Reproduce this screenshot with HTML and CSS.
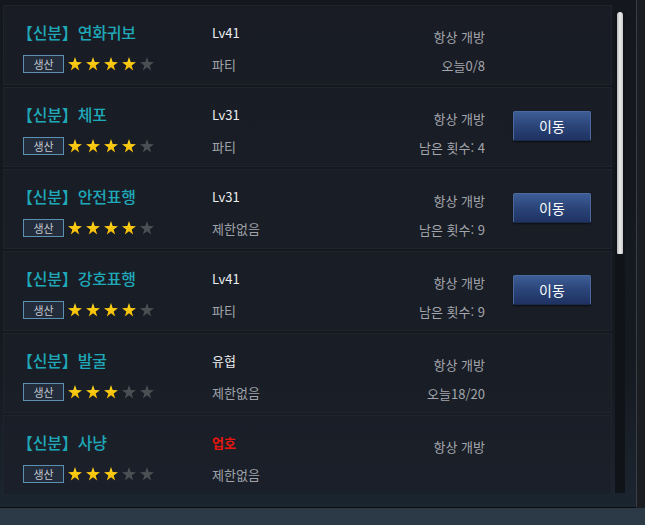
FILE: index.html
```html
<!DOCTYPE html>
<html lang="ko">
<head>
    <meta charset="UTF-8">
    <title>신분 목록</title>
    <link rel="stylesheet" href="styles.css">
</head>
<body>
    <div class="panel">
        <div class="list">
            <div class="row">
                <div class="title">【신분】연화귀보</div>
                <div class="level">Lv41</div>
                <div class="open">항상 개방</div>
                <div class="action"></div>
                <div class="tags">
                    <span class="badge">생산</span>
                    <span class="stars s4"><i></i><i></i><i></i><i></i><i></i></span>
                </div>
                <div class="cond">파티</div>
                <div class="count">오늘0/8</div>
            </div>
            <div class="row">
                <div class="title">【신분】체포</div>
                <div class="level">Lv31</div>
                <div class="open">항상 개방</div>
                <div class="action"><button class="move-btn">이동</button></div>
                <div class="tags">
                    <span class="badge">생산</span>
                    <span class="stars s4"><i></i><i></i><i></i><i></i><i></i></span>
                </div>
                <div class="cond">파티</div>
                <div class="count">남은 횟수: 4</div>
            </div>
            <div class="row">
                <div class="title">【신분】안전표행</div>
                <div class="level">Lv31</div>
                <div class="open">항상 개방</div>
                <div class="action"><button class="move-btn">이동</button></div>
                <div class="tags">
                    <span class="badge">생산</span>
                    <span class="stars s4"><i></i><i></i><i></i><i></i><i></i></span>
                </div>
                <div class="cond">제한없음</div>
                <div class="count">남은 횟수: 9</div>
            </div>
            <div class="row">
                <div class="title">【신분】강호표행</div>
                <div class="level">Lv41</div>
                <div class="open">항상 개방</div>
                <div class="action"><button class="move-btn">이동</button></div>
                <div class="tags">
                    <span class="badge">생산</span>
                    <span class="stars s4"><i></i><i></i><i></i><i></i><i></i></span>
                </div>
                <div class="cond">파티</div>
                <div class="count">남은 횟수: 9</div>
            </div>
            <div class="row">
                <div class="title">【신분】발굴</div>
                <div class="level">유협</div>
                <div class="open">항상 개방</div>
                <div class="action"></div>
                <div class="tags">
                    <span class="badge">생산</span>
                    <span class="stars s3"><i></i><i></i><i></i><i></i><i></i></span>
                </div>
                <div class="cond">제한없음</div>
                <div class="count">오늘18/20</div>
            </div>
            <div class="row">
                <div class="title">【신분】사냥</div>
                <div class="level red">업호</div>
                <div class="open">항상 개방</div>
                <div class="action"></div>
                <div class="tags">
                    <span class="badge">생산</span>
                    <span class="stars s3"><i></i><i></i><i></i><i></i><i></i></span>
                </div>
                <div class="cond">제한없음</div>
                <div class="count"></div>
            </div>
        </div>
        <div class="scroll">
            <div class="track"><div class="thumb"></div></div>
        </div>
    </div>
    <div class="ground"></div>
</body>
</html>
```

FILE: styles.css
```css
* {
    margin: 0;
    padding: 0;
    box-sizing: border-box;
}
body {
    width: 645px;
    height: 525px;
    overflow: hidden;
    background: linear-gradient(180deg, #1d2630 0%, #2b3a46 100%);
    font-family: "Noto Sans CJK KR", "Noto Sans", sans-serif;
}
.panel {
    width: 637px;
    height: 508px;
    display: flex;
    background: linear-gradient(180deg, #14171d 0%, #151920 70%, #1b2530 100%);
    border-right: 1px solid #3a3e44;
    border-bottom: 1px solid #0c0e12;
    box-shadow: 8px 0 0 #1a1d22;
}
.list {
    width: 612px;
    height: 494px;
    overflow: hidden;
    padding: 5px 0 0 3px;
}
.row {
    height: 80px;
    margin-bottom: 2px;
    padding: 10px 20px 0 16px;
    display: grid;
    grid-template-columns: 192px 173px 100px 28px 78px;
    grid-template-rows: 32px 32px;
    align-items: center;
    background: rgba(27, 31, 40, 0.75);
    border: 1px solid #1f232b;
}
.title {
    grid-column: 1;
    grid-row: 1;
    color: #1fa8b8;
    font-size: 16px;
    font-weight: 500;
    margin-left: -3px;
    letter-spacing: -0.2px;
}
.level {
    grid-column: 2;
    grid-row: 1;
    color: #eceef0;
    font-size: 13px;
}
.level.red {
    color: #e8160e;
    font-weight: 700;
}
.open, .count {
    grid-column: 3;
    color: #a3a6ac;
    font-size: 13px;
    text-align: right;
    white-space: nowrap;
}
.open {
    grid-row: 1;
    padding-top: 8px;
}
.count {
    grid-row: 2;
    padding-top: 2px;
}
.cond {
    grid-column: 2;
    grid-row: 2;
    color: #9fa3a9;
    font-size: 13px;
}
.action {
    grid-column: 5;
    grid-row: 1 / 3;
    align-self: center;
    margin-bottom: 8px;
    height: 30px;
}
.tags {
    grid-column: 1;
    grid-row: 2;
    display: flex;
    align-items: center;
}
.badge {
    width: 41px;
    height: 18px;
    border: 1px solid #5d8fb3;
    background: #222c3b;
    color: #c3c7ce;
    font-size: 11px;
    line-height: 16px;
    text-align: center;
    margin-left: 3px;
    margin-right: 4px;
}
.stars {
    display: flex;
    gap: 4px;
}
.stars i {
    width: 14px;
    height: 14px;
    background: #4b4e53;
    clip-path: polygon(50% 0%, 62% 36%, 100% 38%, 69% 60%, 80% 96%, 50% 74%, 20% 96%, 31% 60%, 0% 38%, 38% 36%);
}
.s4 i:nth-child(-n+4),
.s3 i:nth-child(-n+3) {
    background: linear-gradient(180deg, #ffd820 0%, #f4b800 100%);
}
.move-btn {
    width: 78px;
    height: 30px;
    border: 1px solid #4c69a0;
    border-bottom-color: #1b2b4d;
    border-radius: 2px;
    background: linear-gradient(180deg, #3d5d96 0%, #2b4478 50%, #1f3262 100%);
    color: #ffffff;
    font-family: "Noto Sans CJK KR", sans-serif;
    font-size: 14px;
    box-shadow: 0 1px 2px rgba(0, 0, 0, 0.6);
}
.scroll {
    width: 24px;
    height: 493px;
    padding: 12px 0 0 3px;
}
.track {
    width: 10px;
    height: 100%;
    background: #101318;
    padding-left: 2px;
}
.thumb {
    width: 6px;
    height: 242px;
    border-radius: 3px 3px 1px 1px;
    background: linear-gradient(90deg, #b9b9b9 0%, #ececec 50%, #c6c6c6 100%);
}
.ground {
    height: 17px;
}
```
